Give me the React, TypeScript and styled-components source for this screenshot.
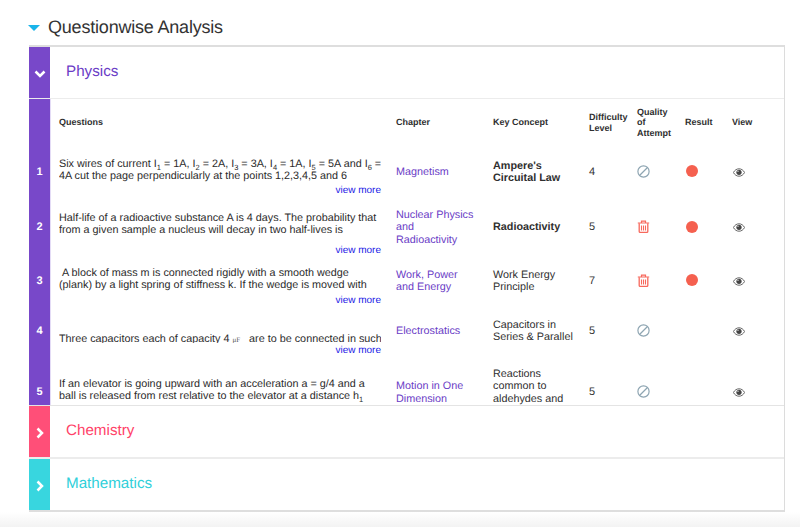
import React from "react";
import styled, { createGlobalStyle } from "styled-components";

const Global = createGlobalStyle`
  html, body { margin: 0; padding: 0; }
  body {
    font-family: "Liberation Sans", Arial, sans-serif;
    color: #2b2b2b;
    background: linear-gradient(to bottom, #fff 0, #fff 512px, #f3f3f3 527px);
    height: 527px;
    overflow: hidden;
    text-rendering: geometricPrecision;
  }
`;

const Page = styled.div`
  width: 800px;
  height: 527px;
  padding: 15px 15px 0 29px;
  box-sizing: border-box;
`;

const Heading = styled.h2`
  display: flex;
  align-items: center;
  gap: 8px;
  height: 24px;
  margin: 0 0 6px -1px;
  font-size: 18px;
  font-weight: 400;
  letter-spacing: -0.2px;
  color: #333;
`;

const Caret = styled.span`
  width: 0;
  height: 0;
  border-left: 6px solid transparent;
  border-right: 6px solid transparent;
  border-top: 6px solid #19b4ea;
  margin-top: 2px;
`;

const Card = styled.div`
  width: 756px;
  height: 467px;
  box-sizing: border-box;
  border-top: 2px solid #dedede;
  border-right: 1px solid #dcdcdc;
  border-bottom: 2px solid #dedede;
  background: #fff;
`;

const SectionHeader = styled.div<{ $border?: boolean }>`
  display: flex;
  height: 51px;
  ${(p) => (p.$border ? "border-bottom: 2px solid #ececec;" : "")}
`;

const Side = styled.div<{ $color: string }>`
  width: 21px;
  flex: none;
  background: ${(p) => p.$color};
  display: flex;
  align-items: center;
  justify-content: center;
  padding-top: 2px;
  box-sizing: border-box;
`;

const Title = styled.div<{ $color: string }>`
  margin-left: 16px;
  padding-top: 16px;
  font-size: 15.2px;
  line-height: 18px;
  color: ${(p) => p.$color};
`;

const PhysicsBody = styled.div`
  height: 306px;
  overflow: hidden;
  border-top: 1px solid #ececec;
  border-bottom: 1px solid #e4e4e4;
`;

const Grid = `
  display: grid;
  grid-template-columns: 22px 345px 97px 96px 48px 48px 47px 1fr;
  box-sizing: border-box;
`;

const HeaderRow = styled.div`
  ${Grid}
  height: 47px;
  font-size: 9px;
  line-height: 10.6px;
  font-weight: 700;
  color: #2f2f2f;
`;

const Row = styled.div<{ $h: number }>`
  ${Grid}
  height: ${(p) => p.$h}px;
  font-size: 10.8px;
  line-height: 12.3px;
`;

const Num = styled.div`
  background: #7848c9;
  border-right: 1px solid #e4dcf6;
  color: #fff;
  font-weight: 700;
  font-size: 11px;
  display: flex;
  align-items: center;
  justify-content: center;
`;

const HeadCell = styled.div<{ $pad?: number }>`
  display: flex;
  align-items: center;
  padding-left: ${(p) => p.$pad ?? 0}px;
`;

const QCell = styled.div<{ $top: number }>`
  padding: ${(p) => p.$top}px 15px 0 8px;
`;

const QText = styled.div<{ $lead?: number; $clip?: number }>`
  height: ${(p) => p.$clip ?? 25}px;
  box-sizing: border-box;
  padding-top: ${(p) => p.$lead ?? 0}px;
  overflow: hidden;
  white-space: nowrap;
  color: #2b2b2b;

  sub {
    font-size: 7.5px;
    line-height: 0;
  }
`;

const ViewMore = styled.a<{ $gap: number }>`
  display: block;
  margin-top: ${(p) => p.$gap}px;
  text-align: right;
  font-size: 10px;
  line-height: 12px;
  color: #1a1ae6;
`;

const Chapter = styled.div`
  display: flex;
  align-items: center;
  color: #6a3cc6;
  padding-right: 16px;
`;

const Concept = styled.div<{ $bold?: boolean }>`
  display: flex;
  align-items: center;
  font-weight: ${(p) => (p.$bold ? 700 : 400)};
  padding-right: 6px;
  color: #2f2f2f;
`;

const Level = styled.div`
  display: flex;
  align-items: center;
  font-size: 11px;
  color: #333;
`;

const IconCell = styled.div<{ $left: number; $up: number }>`
  display: flex;
  align-items: center;
  padding-left: ${(p) => p.$left}px;
  padding-bottom: ${(p) => p.$up}px;
`;

const Dot = styled.span`
  width: 12px;
  height: 12px;
  border-radius: 50%;
  background: #f5604f;
`;

const MicroText = styled.span`
  font-family: "Liberation Serif", serif;
  font-size: 7px;
  color: #555;
`;

const Chevron = ({ down }: { down?: boolean }) => (
  <svg width="12" height="12" viewBox="0 0 12 12">
    <path
      d={down ? "M1.5 3.5L6 8l4.5-4.5" : "M3.5 1.5L8 6l-4.5 4.5"}
      fill="none"
      stroke="#fff"
      strokeWidth="2.5"
    />
  </svg>
);

const Ban = () => (
  <svg width="13" height="13" viewBox="0 0 13 13">
    <circle cx="6.5" cy="6.5" r="5.6" fill="none" stroke="#8ea5b2" strokeWidth="1.2" />
    <path d="M3 10L10 3" stroke="#8ea5b2" strokeWidth="1.2" />
  </svg>
);

const Trash = () => (
  <svg width="13" height="13" viewBox="0 0 13 13" fill="none" stroke="#f7685c">
    <path d="M.8 3h11.4M4.5 3V1.2h4V3" strokeWidth="1.2" />
    <path d="M2.2 3.2v8.2a1 1 0 0 0 1 1h6.6a1 1 0 0 0 1-1V3.2" strokeWidth="1.3" />
    <path d="M4.5 5.5v5M6.5 5.5v5M8.5 5.5v5" strokeWidth="1.1" />
  </svg>
);

const Eye = () => (
  <svg width="12" height="9" viewBox="0 0 12 9">
    <path
      d="M.4 4.5C1.8 2 3.8.8 6 .8s4.2 1.2 5.6 3.7C10.2 7 8.2 8.2 6 8.2S1.8 7 .4 4.5z"
      fill="none"
      stroke="#555"
      strokeWidth="0.9"
    />
    <circle cx="6" cy="4.3" r="2.6" fill="#444" />
    <circle cx="5" cy="3.3" r="0.7" fill="#ddd" />
  </svg>
);

type RowData = {
  h: number;
  top: number;
  gap?: number;
  lead?: number;
  clip?: number;
  q: React.ReactNode;
  chapter: React.ReactNode;
  concept: React.ReactNode;
  bold?: boolean;
  level: number;
  quality: "ban" | "trash";
  result: boolean;
};

const rows: RowData[] = [
  {
    h: 52,
    top: 12,
    gap: 2,
    q: (
      <>
        Six wires of current I<sub>1</sub> = 1A, I<sub>2</sub> = 2A, I<sub>3</sub> = 3A, I<sub>4</sub> = 1A, I<sub>5</sub> = 5A and I<sub>6</sub> =
        <br />
        4A cut the page perpendicularly at the points 1,2,3,4,5 and 6
      </>
    ),
    chapter: "Magnetism",
    concept: "Ampere's Circuital Law",
    bold: true,
    level: 4,
    quality: "ban",
    result: true,
  },
  {
    h: 57,
    top: 14,
    gap: 8,
    q: (
      <>
        Half-life of a radioactive substance A is 4 days. The probability that
        <br />
        from a given sample a nucleus will decay in two half-lives is
      </>
    ),
    chapter: "Nuclear Physics and Radioactivity",
    concept: "Radioactivity",
    bold: true,
    level: 5,
    quality: "trash",
    result: true,
  },
  {
    h: 50,
    top: 12,
    gap: 3,
    q: (
      <>
        &nbsp;A block of mass m is connected rigidly with a smooth wedge
        <br />
        (plank) by a light spring of stiffness k. If the wedge is moved with
      </>
    ),
    chapter: "Work, Power and Energy",
    concept: "Work Energy Principle",
    level: 7,
    quality: "trash",
    result: true,
  },
  {
    h: 50,
    top: 14,
    gap: 2,
    lead: 14,
    clip: 24,
    q: (
      <>
        Three capacitors each of capacity 4 <MicroText>μF</MicroText> &nbsp; are to be connected in such
      </>
    ),
    chapter: "Electrostatics",
    concept: "Capacitors in Series & Parallel",
    level: 5,
    quality: "ban",
    result: false,
  },
  {
    h: 75,
    top: 23,
    q: (
      <>
        If an elevator is going upward with an acceleration a = g/4 and a
        <br />
        ball is released from rest relative to the elevator at a distance h<sub>1</sub>
      </>
    ),
    chapter: "Motion in One Dimension",
    concept: "Reactions common to aldehydes and ketones",
    level: 5,
    quality: "ban",
    result: false,
  },
];

export default function App() {
  return (
    <>
      <Global />
      <Page>
        <Heading>
          <Caret />
          Questionwise Analysis
        </Heading>
        <Card>
          <SectionHeader>
            <Side $color="#7848c9">
              <Chevron down />
            </Side>
            <Title $color="#6a3cc6">Physics</Title>
          </SectionHeader>
          <PhysicsBody>
            <HeaderRow>
              <Num />
              <HeadCell $pad={8}>Questions</HeadCell>
              <HeadCell>Chapter</HeadCell>
              <HeadCell>Key Concept</HeadCell>
              <HeadCell>
                Difficulty
                <br />
                Level
              </HeadCell>
              <HeadCell>
                Quality
                <br />
                of
                <br />
                Attempt
              </HeadCell>
              <HeadCell>Result</HeadCell>
              <HeadCell>View</HeadCell>
            </HeaderRow>
            {rows.map((r, i) => (
              <Row key={i} $h={r.h}>
                <Num>{i + 1}</Num>
                <QCell $top={r.top}>
                  <QText $lead={r.lead} $clip={r.clip}>
                    {r.q}
                  </QText>
                  {r.gap !== undefined && <ViewMore $gap={r.gap}>view more</ViewMore>}
                </QCell>
                <Chapter>{r.chapter}</Chapter>
                <Concept $bold={r.bold}>{r.concept}</Concept>
                <Level>{r.level}</Level>
                <IconCell $left={0} $up={2}>
                  {r.quality === "ban" ? <Ban /> : <Trash />}
                </IconCell>
                <IconCell $left={1} $up={2}>
                  {r.result && <Dot />}
                </IconCell>
                <IconCell $left={1} $up={0}>
                  <Eye />
                </IconCell>
              </Row>
            ))}
          </PhysicsBody>
          <SectionHeader $border>
            <Side $color="#ff4f78">
              <Chevron />
            </Side>
            <Title $color="#ff4268">Chemistry</Title>
          </SectionHeader>
          <SectionHeader>
            <Side $color="#38d6df">
              <Chevron />
            </Side>
            <Title $color="#2fd0da">Mathematics</Title>
          </SectionHeader>
        </Card>
      </Page>
    </>
  );
}
